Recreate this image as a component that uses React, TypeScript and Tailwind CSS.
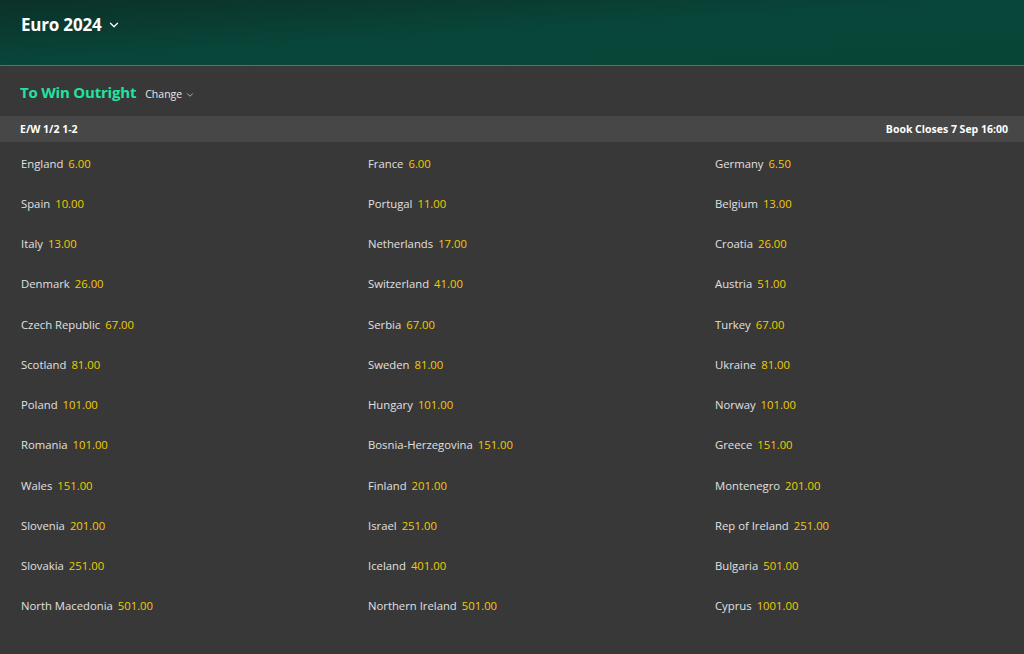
import { ChevronDown } from "lucide-react";

const rows: [string, string][][] = [
  [["England", "6.00"], ["France", "6.00"], ["Germany", "6.50"]],
  [["Spain", "10.00"], ["Portugal", "11.00"], ["Belgium", "13.00"]],
  [["Italy", "13.00"], ["Netherlands", "17.00"], ["Croatia", "26.00"]],
  [["Denmark", "26.00"], ["Switzerland", "41.00"], ["Austria", "51.00"]],
  [["Czech Republic", "67.00"], ["Serbia", "67.00"], ["Turkey", "67.00"]],
  [["Scotland", "81.00"], ["Sweden", "81.00"], ["Ukraine", "81.00"]],
  [["Poland", "101.00"], ["Hungary", "101.00"], ["Norway", "101.00"]],
  [["Romania", "101.00"], ["Bosnia-Herzegovina", "151.00"], ["Greece", "151.00"]],
  [["Wales", "151.00"], ["Finland", "201.00"], ["Montenegro", "201.00"]],
  [["Slovenia", "201.00"], ["Israel", "251.00"], ["Rep of Ireland", "251.00"]],
  [["Slovakia", "251.00"], ["Iceland", "401.00"], ["Bulgaria", "501.00"]],
  [["North Macedonia", "501.00"], ["Northern Ireland", "501.00"], ["Cyprus", "1001.00"]],
];

export default function App() {
  return (
    <div
      className="min-h-[654px] w-[1024px] bg-[#383838] text-[#e0e0e0]"
      style={{ fontFamily: '"Open Sans", "Noto Sans", sans-serif' }}
    >
      <header className="h-[66px] border-b border-[#2f8a62] bg-gradient-to-br from-[#0b3128] via-[#08463a] to-[#074636] px-[21px] pt-[12px]">
        <div className="flex items-center gap-[6px] text-white">
          <span className="text-[17px] font-bold tracking-[-0.2px]">Euro 2024</span>
          <ChevronDown size={14} strokeWidth={2.2} className="mt-[1px]" />
        </div>
      </header>

      <div className="flex h-[50px] items-center gap-[9px] px-[20px] pt-[2px]">
        <span className="text-[15px] font-bold tracking-[-0.2px] text-[#23e2a0]">To Win Outright</span>
        <span className="mt-[5px] flex items-center gap-[3px] text-[10.5px] text-[#e8e8e8]">
          Change
          <ChevronDown size={10} strokeWidth={1.6} />
        </span>
      </div>

      <div className="flex h-[26px] items-center justify-between bg-[#474747] pl-[20px] pr-[16px] pt-[2px] text-[10.5px] font-bold text-white">
        <span>E/W 1/2 1-2</span>
        <span>Book Closes 7 Sep 16:00</span>
      </div>

      <div className="pt-[2px]">
        {rows.map((row, i) => (
          <div key={i} className="grid h-[40.25px] grid-cols-[347px_347px_1fr] items-center pl-[21px] text-[11.3px]">
            {row.map(([name, odds]) => (
              <div key={name} className="flex items-center gap-[5px]">
                <span className="text-[#e0e0e0]">{name}</span>
                <span className="text-[#f0cc00]">{odds}</span>
              </div>
            ))}
          </div>
        ))}
      </div>
    </div>
  );
}
